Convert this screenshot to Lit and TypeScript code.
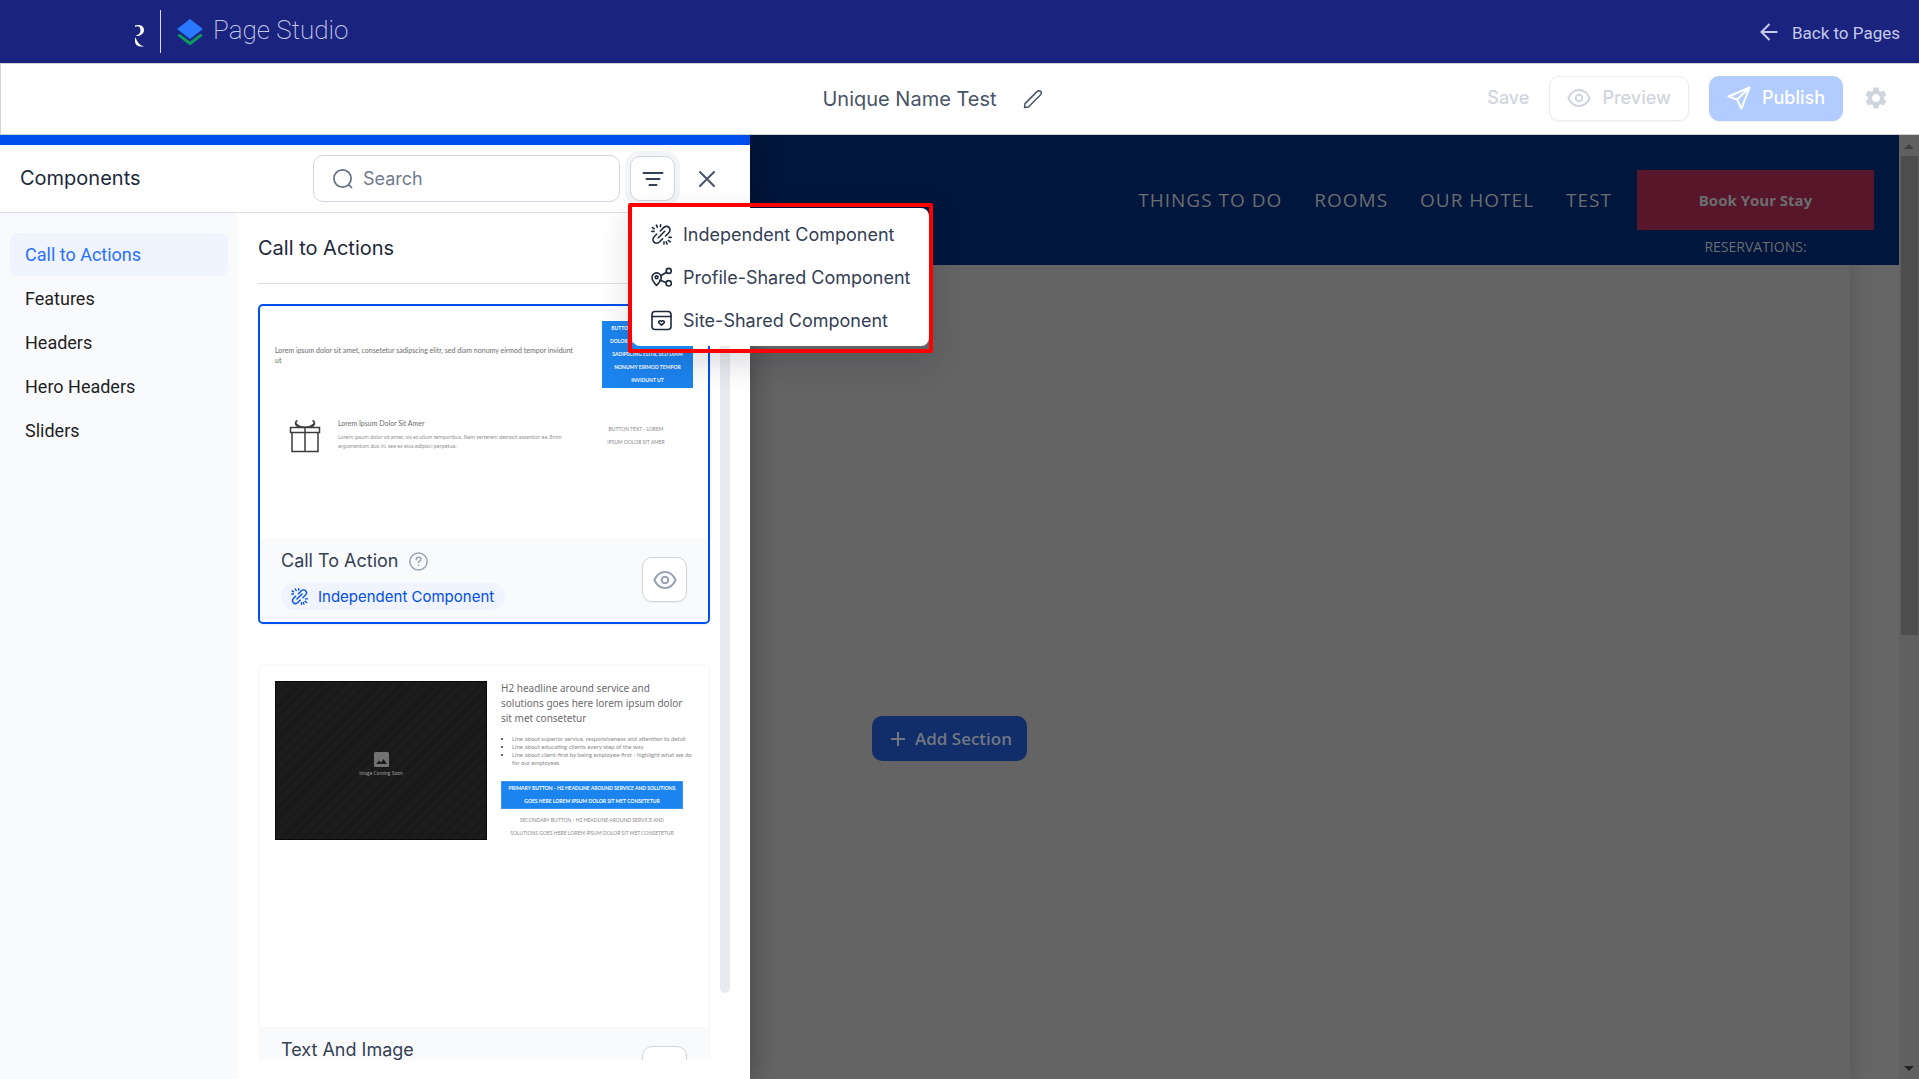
import { LitElement, html, css, nothing } from "lit";
import { customElement, state } from "lit/decorators.js";
import { classMap } from "lit/directives/class-map.js";

const unlinkIcon = (cls: string) => html`<svg class=${cls} viewBox="0 0 21 21" aria-hidden="true">
  <path d="M9.300 7 12.600 3.600C14.200 2 16.600 2 18 3.400s1.400 3.800-.2 5.400L14.600 12M11.600 14.800 8.400 18C6.800 19.500 4.400 19.500 3 18.100s-1.400-3.800.2-5.400L5.600 10.200M7.300 13.700 13.700 7.300M5.400 1.200 6.300 3.200M9.600.8 9.400 2.600M1.400 3.600 3.200 4.700M.9 7.400H3M18 13.400H20.200M17.300 16.400 19.300 17.800M15.300 17.800 16 19.900M13 18.100V20"/>
</svg>`;

const profileIcon = (cls: string) => html`<svg class=${cls} viewBox="0 0 21 21" aria-hidden="true">
  <path d="M5.500 18.400C3.500 16.300 1 13.400 1 10.500a4.600 4.600 0 0 1 9.200 0c0 2.900-2.500 5.800-4.700 7.900Z"/>
  <circle cx="5.600" cy="10.300" r="1.400"/>
  <circle cx="17.700" cy="3.900" r="2.500"/>
  <circle cx="17.700" cy="16.300" r="2.700"/>
  <path d="M9.700 8.800 15.600 5.200M9 13.200 15.100 15.600"/>
</svg>`;

const siteIcon = (cls: string) => html`<svg class=${cls} viewBox="0 0 21 21" aria-hidden="true">
  <rect x="1" y="1.500" width="19" height="18" rx="3"/>
  <path d="M1 6.500H20M10.500 15.200 8 12.900c-1.100-1.200.8-3.100 2.500-1.600 1.700-1.500 3.600.4 2.500 1.600Z"/>
</svg>`;

const eyeIcon = (cls: string) => html`<svg class=${cls} viewBox="0 0 24 24" aria-hidden="true">
  <path d="M1.400 12C3.600 7 7.500 4 12 4s8.400 3 10.600 8c-2.200 5-6.100 8-10.600 8S3.600 17 1.400 12Z"/>
  <circle cx="12" cy="12" r="3.300"/>
</svg>`;

const menuItems = [
  { label: "Independent Component", icon: unlinkIcon },
  { label: "Profile-Shared Component", icon: profileIcon },
  { label: "Site-Shared Component", icon: siteIcon },
];

const categories = ["Call to Actions", "Features", "Headers", "Hero Headers", "Sliders"];

@customElement("call-to-action-preview")
export class CallToActionPreview extends LitElement {
  static styles = css`
    :host { display: block; padding: 15px; font-family: Lato, "Open Sans", sans-serif; color: #6b6b6b; }
    .row { display: grid; grid-template-columns: 1fr 91px; align-items: center; }
    .lead { margin: 0; font-size: 7px; line-height: 10px; }
    .primary { padding: 1px 8px; background: #1c84ee; color: #fff; font-size: 5px; line-height: 13px; font-weight: 700; text-align: center; white-space: nowrap; }
    .feature { display: grid; grid-template-columns: 60px 1fr 114px; column-gap: 3px; align-items: center; margin-top: 30px; }
    .gift { width: 32px; height: 34px; margin: auto; fill: none; stroke: #3c3c3c; stroke-width: 1.5; }
    .copy { padding-bottom: 3px; }
    .title { margin: 0 0 5px; font-size: 7px; line-height: 10px; font-weight: 400; }
    .text { margin: 0; font-family: "Noto Sans", sans-serif; font-size: 5px; line-height: 9px; color: #8a8a8a; white-space: nowrap; }
    .secondary { font-size: 5px; line-height: 13px; text-align: center; color: #8a8a8a; }
  `;
  render() {
    return html`
      <div class="row">
        <p class="lead">Lorem ipsum dolor sit amet, consetetur sadipscing elitr, sed diam nonumy eirmod tempor invidunt<br>ut</p>
        <div class="primary">BUTTON TEXT - LOREM IPSUM<br>DOLOR SIT AMET, CONSETETUR<br>SADIPSCING ELITR, SED DIAM<br>NONUMY EIRMOD TEMPOR<br>INVIDUNT UT</div>
      </div>
      <div class="feature">
        <svg class="gift" viewBox="0 0 32 34" aria-hidden="true">
          <path d="M1.500 8.500h29v5h-29zM3 13.500h26v19H3zM16 8.500v24"/>
          <path d="M8.500 1.500C4 3 8 8 16 8.200 24 8 28 3 23.500 1.500M8 2c-3 2-1 5 2 6M24 2c3 2 1 5-2 6"/>
        </svg>
        <div class="copy">
          <h4 class="title">Lorem Ipsum Dolor Sit Amer</h4>
          <p class="text">Lorem ipsum dolor sit amet, vis et ullum temporibus. Nam verterem detraxit assentior ea. Enim<br>argumentum duo in, sea ex eius adipisci perpetua.</p>
        </div>
        <div class="secondary">BUTTON TEXT - LOREM<br>IPSUM DOLOR SIT AMER</div>
      </div>`;
  }
}

@customElement("text-image-preview")
export class TextImagePreview extends LitElement {
  static styles = css`
    :host { display: grid; grid-template-columns: 212px 1fr; column-gap: 14px; align-items: start; padding: 15px; font-family: Lato, "Open Sans", sans-serif; color: #6b6b6b; }
    .image { box-sizing: border-box; height: 159px; display: flex; flex-direction: column; align-items: center; justify-content: center; gap: 3px; padding-top: 6px; border: 1px solid #0a0a0a; background: repeating-linear-gradient(135deg, #191919 0 4px, #1c1c1c 4px 8px); color: #9a9a9a; font-size: 5px; line-height: 6px; font-weight: 400; }
    .glyph { width: 15px; height: 15px; }
    .headline { margin: 0 0 9px; font-family: "Noto Sans", sans-serif; font-size: 10px; line-height: 15px; font-weight: 400; white-space: nowrap; }
    .points { margin: 0; padding-left: 11px; font-size: 6px; line-height: 8px; color: #8a8a8a; white-space: nowrap; }
    .points ::marker { color: #333; }
    .buttons { width: 182px; text-align: center; font-size: 5px; line-height: 13px; white-space: nowrap; }
    .primary { margin-top: 14px; border: 1px solid #3d94f0; background: #1c84ee; color: #fff; font-weight: 700; }
    .secondary { margin-top: 5px; color: #8a8a8a; }
  `;
  render() {
    return html`
      <div class="image">
        <svg class="glyph" viewBox="0 0 15 15" aria-hidden="true">
          <rect width="15" height="15" rx="1.500" fill="#737373"/>
          <path d="M2 12 5 8.500l2 2L9.500 7 13 12Z" fill="#191919"/>
        </svg>
        <span>Image Coming Soon</span>
      </div>
      <div>
        <h4 class="headline">H2 headline around service and<br>solutions goes here lorem ipsum dolor<br>sit met consetetur</h4>
        <ul class="points">
          <li>Line about superior service, responsiveness and attention to detail</li>
          <li>Line about educating clients every step of the way</li>
          <li>Line about client-first by being employee-first - highlight what we do<br>for our employees</li>
        </ul>
        <div class="buttons">
          <div class="primary">PRIMARY BUTTON - H2 HEADLINE AROUND SERVICE AND SOLUTIONS<br>GOES HERE LOREM IPSUM DOLOR SIT MET CONSETETUR</div>
          <div class="secondary">SECONDARY BUTTON - H2 HEADLINE AROUND SERVICE AND<br>SOLUTIONS GOES HERE LOREM IPSUM DOLOR SIT MET CONSETETUR</div>
        </div>
      </div>`;
  }
}

@customElement("app-root")
export class AppRoot extends LitElement {
  @state() private category = "Call to Actions";
  @state() private menuOpen = true;

  static styles = css`
    :host { display: block; font-family: Inter, "Liberation Sans", sans-serif; }
    * { box-sizing: border-box; }
    button { font: inherit; cursor: pointer; }
    a { text-decoration: none; }
    .app { height: 100vh; display: flex; flex-direction: column; overflow: hidden; background: #fff; }

    .topbar { flex: none; height: 63px; display: flex; align-items: center; padding: 0 19px 0 135px; background: #1a237e; color: #c5cae9; font-family: Roboto, sans-serif; }
    .mark { width: 10px; height: 24px; margin-top: 8px; }
    .rule { width: 1px; height: 43px; margin: 0 16px 0 15px; background: #d5d8ee; }
    .layers { width: 26px; height: 28px; }
    .product { margin-left: 10px; padding-bottom: 4px; font-size: 26px; line-height: 34px; font-weight: 200; }
    .back { display: flex; align-items: center; gap: 14px; margin-left: auto; color: #c5cae9; font-size: 17px; line-height: 24px; padding-top: 2px; }
    .arrow { width: 18px; height: 18px; margin-bottom: 2px; fill: none; stroke: #c5cae9; stroke-width: 2; }

    .toolbar { position: relative; z-index: 2; flex: none; height: 72px; display: grid; grid-template-columns: 1fr auto 1fr; align-items: center; padding: 0 32px 0 19px; border: 1px solid #d2d2d2; border-right: 0; background: #fff; }
    .page-name { grid-column: 2; display: flex; align-items: center; gap: 26px; margin-right: 42px; }
    .page-title { margin: 0; font-size: 20px; line-height: 28px; font-weight: 400; color: #475467; }
    .icon-button { display: flex; padding: 0; border: 0; background: none; }
    .pencil { width: 20px; height: 20px; fill: none; stroke: #475467; stroke-width: 1.5; }
    .actions { display: flex; align-items: center; justify-content: flex-end; padding-bottom: 2px; font-size: 18px; line-height: 24px; font-weight: 500; }
    .save { padding: 0; border: 0; background: none; color: #d0d5dd; margin-right: 20px; }
    .action { display: flex; align-items: center; height: 45px; padding: 0 17px; border: 1px solid #eaecf0; border-radius: 10px; background: #fff; color: #d0d5dd; gap: 11px; box-shadow: 0 1px 2px rgba(16, 24, 40, 0.05); }
    .publish { margin: 0 22px 0 20px; border-color: #b2ccff; background: #b2ccff; color: #fff; }
    .action-icon { width: 24px; height: 24px; fill: none; stroke: currentColor; stroke-width: 2; stroke-linejoin: round; }
    .gear { width: 22px; height: 22px; fill: #d0d5dd; }

    .workspace { flex: 1; min-height: 0; display: grid; grid-template: minmax(0, 1fr) / minmax(0, 1fr) 20px; }
    .canvas { grid-area: 1 / 1; display: flex; flex-direction: column; overflow: hidden; background: #666; font-family: "Open Sans", "Noto Sans", sans-serif; }
    .site-nav { position: relative; flex: none; height: 130px; display: flex; align-items: flex-start; justify-content: flex-end; padding: 35px 25px 0; background: #00163c; }
    .site-links { display: flex; gap: 32px; margin-right: 25px; font-size: 19px; line-height: 60px; letter-spacing: 1px; }
    .site-links a, .book { color: #6b6d70; }
    .booking { width: 237px; text-align: center; }
    .book { display: block; padding-top: 1px; background: #58162a; font-size: 15px; line-height: 59px; font-weight: 700; }
    .reservations { margin: 5px 0 0; font-size: 14px; line-height: 24px; color: #6b6d70; }
    .section { flex: 1; display: flex; justify-content: center; align-items: flex-start; margin-right: 49px; padding: 451px 0 0 49px; background: #646464; box-shadow: 0 0 20px rgba(0, 0, 0, 0.2); }
    .add { display: flex; align-items: center; gap: 10px; height: 45px; padding: 0 15px 0 19px; border: 0; border-radius: 10px; background: #112e6b; color: #707682; font-size: 17px; font-weight: 600; }
    .plus { width: 14px; height: 14px; stroke: #707682; stroke-width: 2; fill: none; }

    .scrollbar { grid-area: 1 / 2; display: flex; flex-direction: column; align-items: center; background: #606060; padding: 9px 0 8px; }
    .tri { width: 10px; height: 5px; fill: #404040; }
    .tri-down { margin-top: auto; fill: #222; }
    .handle { width: 17px; height: 479px; margin-top: 7px; background: #4d4d4d; }

    .drawer { grid-area: 1 / 1; z-index: 1; width: min(750px, 100%); display: flex; flex-direction: column; border-top: 10px solid #004eeb; background: #fff; box-shadow: 8px 0 20px rgba(0, 0, 0, 0.2); }
    .drawer-head { flex: none; display: flex; align-items: center; height: 68px; padding: 0 34px 0 20px; border-bottom: 1px solid #dcdde6; }
    .drawer-title { margin: 0 auto 0 0; padding-bottom: 2px; font-size: 20px; line-height: 28px; font-weight: 400; color: #1d2939; }
    .search { display: flex; align-items: center; gap: 9px; width: 307px; height: 47px; padding: 0 18px; border: 1px solid #d0d5dd; border-radius: 10px; }
    .search-icon { flex: none; width: 22px; height: 22px; fill: none; stroke: #667085; stroke-width: 1.7; }
    .search-input { min-width: 0; flex: 1; padding: 0; border: 0; outline: 0; font: 400 18px/24px Inter, sans-serif; color: #344054; }
    .search-input::placeholder { color: #717b8e; opacity: 1; }
    .filter { position: relative; margin: 0 23px 0 10px; }
    .filter-button { display: flex; align-items: center; justify-content: center; width: 45px; height: 45px; padding: 0; border: 1px solid #d0d5dd; border-radius: 10px; background: #fff; box-shadow: 0 0 0 5px #f2f4f7; }
    .filter-icon { width: 22px; height: 16px; fill: none; stroke: #344054; stroke-width: 2; stroke-linecap: round; }
    .close { width: 18px; height: 18px; fill: none; stroke: #475467; stroke-width: 2; stroke-linecap: round; }
    .callout { position: absolute; z-index: 2; top: 47px; left: -2px; border: 4px solid #f00; border-radius: 2px; padding-top: 1px; padding-bottom: 3px; box-shadow: 0 12px 30px rgba(16, 24, 40, 0.14); }
    .menu { width: 297px; margin: 0; padding: 5px 0 4px; list-style: none; border-radius: 8px; background: #fff; }
    .menu-item { display: flex; align-items: center; gap: 11px; width: 100%; height: 43px; padding: 0 19px; border: 0; background: none; color: #344054; font-size: 18px; line-height: 24px; text-align: left; white-space: nowrap; }
    .menu-icon { flex: none; width: 21px; height: 21px; fill: none; stroke: #1d2939; stroke-width: 1.6; stroke-linecap: round; stroke-linejoin: round; }

    .drawer-body { flex: 1; min-height: 0; display: grid; grid-template-columns: 238px 1fr; }
    .categories { display: flex; flex-direction: column; gap: 1px; padding: 20px 10px; background: #f9fafc; font-family: Roboto, sans-serif; }
    .category { height: 43px; padding: 0 15px; border-radius: 8px; font-size: 18px; line-height: 44px; font-weight: 400; color: #1f1f1f; }
    .category.active { background: #eff4ff; color: #2970ff; }
    .results { min-width: 0; min-height: 0; display: flex; flex-direction: column; padding: 0 20px 19px; }
    .results-title { flex: none; height: 71px; margin: 0 20px 0 0; border-bottom: 1px solid #dcdee2; font-size: 20px; line-height: 70px; font-weight: 400; color: #1d2939; }
    .scroller { flex: 1; min-height: 0; display: flex; gap: 9px; padding-top: 20px; }
    .list { flex: 1; min-width: 0; overflow: hidden; }
    .thumb-bar { flex: none; width: 10px; height: 689px; border-radius: 5px; background: #e9eaef; }
    .card { margin: 0 1px 40px 0; border: 2px solid #fafafa; border-radius: 5px; background: #fff; box-shadow: 0 1px 2px rgba(16, 24, 40, 0.08); }
    .card.selected { border-color: #004eeb; }
    .preview { height: 232px; }
    .preview.tall { height: 361px; }
    .card-foot { display: flex; align-items: flex-start; justify-content: space-between; height: 84px; padding: 9px 21px 0; border-radius: 0 0 4px 4px; background: #f9fafc; }
    .card-name { display: flex; align-items: center; gap: 11px; margin: 0 0 8px; font-size: 18px; line-height: 28px; font-weight: 400; color: #344054; }
    .help { width: 19px; height: 19px; fill: none; stroke: #98a2b3; stroke-width: 1.5; stroke-linecap: round; }
    .badge { display: flex; align-items: center; gap: 10px; height: 27px; padding: 0 11px 0 10px; border-radius: 14px; background: #eff4ff; color: #004eeb; font-size: 15px; }
    .badge-icon { width: 17px; height: 17px; fill: none; stroke: #004eeb; stroke-width: 1.7; stroke-linecap: round; }
    .view { display: flex; align-items: center; justify-content: center; width: 45px; height: 45px; margin-top: 10px; padding: 0; border: 1px solid #d0d5dd; border-radius: 10px; background: #fff; color: #98a2b3; box-shadow: 0 1px 2px rgba(16, 24, 40, 0.05); }
  `;

  private card(name: string, badge: string, selected: boolean, preview: unknown) {
    return html`<article class=${classMap({ card: true, selected })}>
      <div class=${classMap({ preview: true, tall: !selected })}>${preview}</div>
      <div class="card-foot">
        <div>
          <h3 class="card-name">${name}
            ${badge
              ? html`<svg class="help" viewBox="0 0 19 19" aria-hidden="true">
                  <circle cx="9.500" cy="9.500" r="8.600"/>
                  <path d="M7.200 7.400c.3-3 4.700-2.700 4.700 0 0 1.700-2.300 1.800-2.400 3.300M9.500 13.300v.1"/>
                </svg>`
              : nothing}
          </h3>
          ${badge ? html`<span class="badge">${unlinkIcon("badge-icon")}${badge}</span>` : nothing}
        </div>
        <button class="view" aria-label="Preview ${name}">${eyeIcon("action-icon")}</button>
      </div>
    </article>`;
  }

  render() {
    return html`<div class="app">
      <header class="topbar">
        <svg class="mark" viewBox="0 0 10 24" aria-hidden="true">
          <path d="M0 1.500C1.500.5 9 0 9 6 9 10 4.500 12 2 12.100L1 11.500C4.500 10.500 5.500 8.500 5.500 6 5.500 2 2.500 1.300 0 3ZM0 13.500C1.500 13.500 1.500 20.500 9 22.300 4 23.100 0 21.500 0 17Z" fill="#fff"/>
        </svg>
        <span class="rule"></span>
        <svg class="layers" viewBox="0 0 26 28" aria-hidden="true">
          <path d="M13 1 26 11 13 21 0 11Z" fill="#2979ff"/>
          <path d="M0 17.500 2.600 15.700 13 23.500 23.400 15.700 26 17.500 13 27.500Z" fill="#0f9960"/>
        </svg>
        <span class="product">Page Studio</span>
        <a class="back" href="#pages">
          <svg class="arrow" viewBox="0 0 18 18" aria-hidden="true"><path d="M17.500 9H1.800M9.500 1 1.500 9l8 8"/></svg>
          Back to Pages
        </a>
      </header>

      <div class="toolbar">
        <div class="page-name">
          <h1 class="page-title">Unique Name Test</h1>
          <button class="icon-button" aria-label="Rename page">
            <svg class="pencil" viewBox="0 0 20 20" aria-hidden="true"><path d="M1.500 18.500 2 14.600 14.200 2.400a2.400 2.400 0 0 1 3.400 3.400L5.400 18Z" stroke-linejoin="round"/></svg>
          </button>
        </div>
        <div class="actions">
          <button class="save">Save</button>
          <button class="action">${eyeIcon("action-icon")}Preview</button>
          <button class="action publish">
            <svg class="action-icon" viewBox="0 0 24 24" aria-hidden="true"><path d="M22.500 1.500 1.500 10.500 10 13.500 14.500 22.500ZM22.500 1.500 10 13.500"/></svg>
            Publish
          </button>
          <button class="icon-button" aria-label="Settings">
            <svg class="gear" viewBox="2 2 20 20" aria-hidden="true"><path d="M19.140 12.940c.04-.3.06-.61.06-.94 0-.32-.02-.64-.07-.94l2.030-1.580c.18-.14.23-.41.12-.61l-1.920-3.320c-.12-.22-.37-.29-.59-.22l-2.390.96c-.5-.38-1.030-.7-1.620-.94l-.36-2.540c-.04-.24-.24-.41-.48-.41h-3.840c-.24 0-.43.17-.47.41l-.36 2.540c-.59.24-1.130.57-1.620.94l-2.390-.96c-.22-.08-.47 0-.59.22L2.740 8.870c-.12.21-.08.47.12.61l2.030 1.580c-.05.3-.09.63-.09.94s.02.64.07.94l-2.030 1.580c-.18.14-.23.41-.12.61l1.920 3.320c.12.22.37.29.59.22l2.390-.96c.5.38 1.030.7 1.620.94l.36 2.540c.05.24.24.41.48.41h3.840c.24 0 .44-.17.47-.41l.36-2.540c.59-.24 1.130-.56 1.620-.94l2.390.96c.22.08.47 0 .59-.22l1.920-3.320c.12-.22.07-.47-.12-.61l-2.010-1.580zM12 15.600c-1.980 0-3.600-1.620-3.600-3.600s1.620-3.600 3.600-3.600 3.600 1.620 3.600 3.600-1.620 3.600-3.600 3.600z"/></svg>
          </button>
        </div>
      </div>

      <div class="workspace">
        <main class="canvas">
          <nav class="site-nav" aria-label="Site">
            <div class="site-links">
              ${["THINGS TO DO", "ROOMS", "OUR HOTEL", "TEST"].map((t) => html`<a href="#site">${t}</a>`)}
            </div>
            <div class="booking">
              <a class="book" href="#book">Book Your Stay</a>
              <p class="reservations">RESERVATIONS:</p>
            </div>
          </nav>
          <section class="section">
            <button class="add">
              <svg class="plus" viewBox="0 0 14 14" aria-hidden="true"><path d="M7 0v14M0 7h14"/></svg>
              Add Section
            </button>
          </section>
        </main>
        <div class="scrollbar" aria-hidden="true">
          <svg class="tri" viewBox="0 0 10 5"><path d="M0 5 5 0l5 5Z"/></svg>
          <div class="handle"></div>
          <svg class="tri tri-down" viewBox="0 0 10 5"><path d="M0 0h10L5 5Z"/></svg>
        </div>

        <aside class="drawer" aria-label="Components">
          <div class="drawer-head">
            <h2 class="drawer-title">Components</h2>
            <label class="search">
              <svg class="search-icon" viewBox="0 0 22 22" aria-hidden="true"><circle cx="10.500" cy="10.500" r="8.600"/><path d="M16.600 16.600 20 20"/></svg>
              <input class="search-input" type="search" placeholder="Search" aria-label="Search components">
            </label>
            <div class="filter">
              <button class="filter-button" aria-label="Filter" aria-expanded=${this.menuOpen} @click=${() => (this.menuOpen = !this.menuOpen)}>
                <svg class="filter-icon" viewBox="0 0 22 16" aria-hidden="true"><path d="M1.500 2h19M4.500 8h13M7.500 14h7"/></svg>
              </button>
              ${this.menuOpen
                ? html`<div class="callout"><ul class="menu">
                    ${menuItems.map((m) => html`<li><button class="menu-item">${m.icon("menu-icon")}${m.label}</button></li>`)}
                  </ul></div>`
                : nothing}
            </div>
            <button class="icon-button" aria-label="Close">
              <svg class="close" viewBox="0 0 18 18" aria-hidden="true"><path d="M2 2l14 14M16 2 2 16"/></svg>
            </button>
          </div>
          <div class="drawer-body">
            <nav class="categories" aria-label="Categories">
              ${categories.map((c) => html`<a href="#category" class=${classMap({ category: true, active: c === this.category })} @click=${() => (this.category = c)}>${c}</a>`)}
            </nav>
            <section class="results">
              <h2 class="results-title">${this.category}</h2>
              <div class="scroller">
                <div class="list">
                  ${this.card("Call To Action", "Independent Component", true, html`<call-to-action-preview></call-to-action-preview>`)}
                  ${this.card("Text And Image", "", false, html`<text-image-preview></text-image-preview>`)}
                </div>
                <div class="thumb-bar"></div>
              </div>
            </section>
          </div>
        </aside>
      </div>
    </div>`;
  }
}
